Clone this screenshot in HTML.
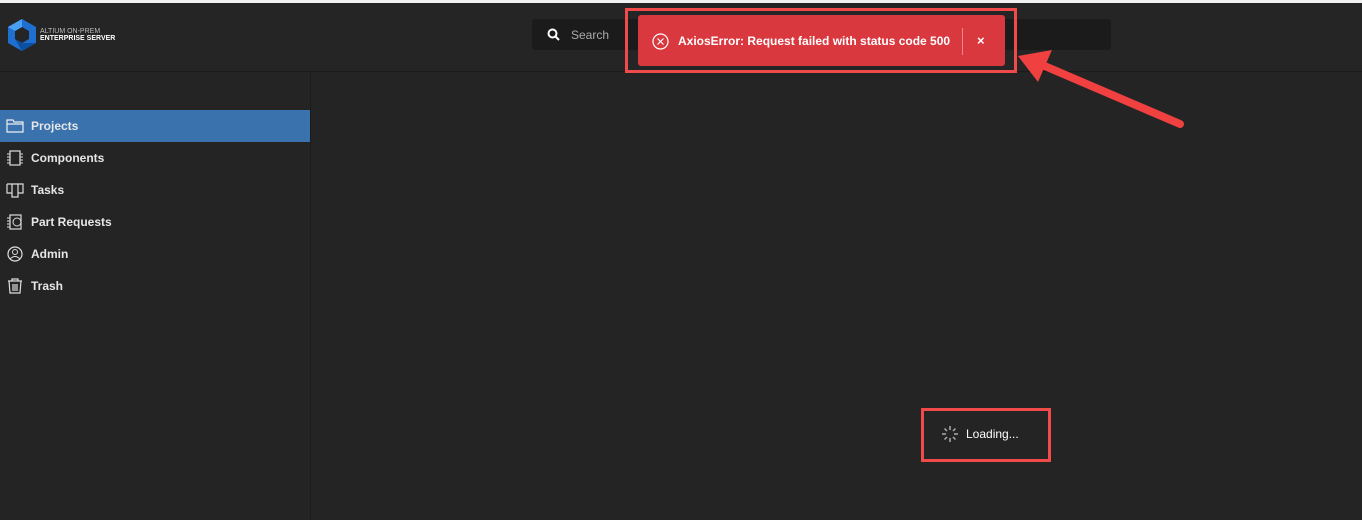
<!DOCTYPE html>
<html><head><style>
body{margin:0;width:1362px;height:520px;background:#242424;font-family:"Liberation Sans",sans-serif;position:relative;overflow:hidden}
.abs{position:absolute}
.nav{position:absolute;left:0;width:310px;height:32px;color:#e6e6e6;font-size:12px;font-weight:bold;line-height:32px}
.nav span{position:absolute;left:31px}
.nav svg{position:absolute;left:6px;top:8px}
</style></head><body>
<div class="abs" style="left:0;top:0;width:1362px;height:3px;background:#f2f2f2"></div>
<div class="abs" style="left:0;top:3px;width:1362px;height:68px;background:#252525;border-bottom:1px solid #1a1a1a"></div>
<div class="abs" style="left:310px;top:72px;width:1px;height:448px;background:#1c1c1c"></div>
<svg class="abs" style="left:7px;top:18px" width="30" height="34" viewBox="0 0 30 34"><path d="M15 1L29 9V25L15 33L1 25V9Z" fill="#1f6fd1"/><path d="M15 9L22 13V21L15 25L8 21V13Z" fill="#252525"/><path d="M1 9L15 1L15 9L8 13Z" fill="#49a0f0"/><path d="M8 21L15 25L29 25L15 33Z" fill="#0d4fa0"/></svg>
<div class="abs" style="left:40px;top:28px;font-size:7px;color:#bbb;line-height:7px">ALTIUM ON-PREM<br><b style="color:#fff">ENTERPRISE SERVER</b></div>
<div class="abs" style="left:532px;top:19px;width:579px;height:31px;background:#1b1b1b;border-radius:3px"></div>
<svg class="abs" style="left:547px;top:28px" width="13" height="13" viewBox="0 0 13 13"><circle cx="5.5" cy="5.5" r="4" fill="none" stroke="#fff" stroke-width="2"/><path d="M8.5 8.5L12 12" stroke="#fff" stroke-width="2"/></svg>
<div class="abs" style="left:571px;top:28px;font-size:12px;color:#aaa">Search</div>
<div class="abs" style="left:0;top:110px;width:310px;height:32px;background:#3a72ad"></div>
<div class="nav" style="top:110px"><svg width="18" height="16" viewBox="0 0 18 16"><path d="M1 2H7L8 4H17V14H1Z M1 6H17" fill="none" stroke="#eee" stroke-width="1.2"/></svg><span>Projects</span></div>
<div class="nav" style="top:142px"><svg width="18" height="16" viewBox="0 0 18 16"><rect x="4" y="1" width="10" height="14" fill="none" stroke="#ddd" stroke-width="1.2"/><path d="M1 4H4M1 7H4M1 10H4M1 13H4M14 4H17M14 7H17M14 10H17M14 13H17" stroke="#ddd"/></svg><span>Components</span></div>
<div class="nav" style="top:174px"><svg width="18" height="16" viewBox="0 0 18 16"><path d="M1 2H17V11H12V2M6 2V15H12V11M6 11H1V2" fill="none" stroke="#ddd" stroke-width="1.2"/></svg><span>Tasks</span></div>
<div class="nav" style="top:206px"><svg width="18" height="16" viewBox="0 0 18 16"><rect x="4" y="1" width="11" height="14" fill="none" stroke="#ddd" stroke-width="1.2"/><circle cx="11" cy="8" r="4" fill="none" stroke="#ddd"/><path d="M1 4H4M1 7H4M1 10H4M1 13H4" stroke="#ddd"/></svg><span>Part Requests</span></div>
<div class="nav" style="top:238px"><svg width="18" height="16" viewBox="0 0 18 16"><circle cx="9" cy="8" r="7" fill="none" stroke="#ddd" stroke-width="1.2"/><circle cx="9" cy="6" r="2.5" fill="none" stroke="#ddd"/><path d="M4 13Q9 8 14 13" fill="none" stroke="#ddd"/></svg><span>Admin</span></div>
<div class="nav" style="top:270px"><svg width="18" height="16" viewBox="0 0 18 16"><path d="M2 3H16M6 3V1H12V3M3 3L4 15H14L15 3M7 6V13M9 6V13M11 6V13" fill="none" stroke="#ddd" stroke-width="1.2"/></svg><span>Trash</span></div>
<div class="abs" style="left:625px;top:8px;width:386px;height:59px;border:3px solid #f04a4a"></div>
<div class="abs" style="left:638px;top:15px;width:367px;height:51px;background:#d9383f;border-radius:3px"></div>
<svg class="abs" style="left:652px;top:33px" width="17" height="17" viewBox="0 0 17 17"><circle cx="8.5" cy="8.5" r="7.5" fill="none" stroke="#fff" stroke-width="1.2"/><path d="M5.5 5.5L11.5 11.5M11.5 5.5L5.5 11.5" stroke="#fff" stroke-width="1.2"/></svg>
<div class="abs" style="left:678px;top:34px;font-size:12px;font-weight:bold;color:#fff">AxiosError: Request failed with status code 500</div>
<div class="abs" style="left:962px;top:28px;width:1px;height:27px;background:#e88"></div>
<div class="abs" style="left:977px;top:33px;font-size:13px;font-weight:bold;color:#fff">×</div>
<svg class="abs" style="left:1010px;top:48px" width="190" height="90" viewBox="0 0 190 90"><path d="M170 76L30 16" stroke="#f04040" stroke-width="8" stroke-linecap="round"/><path d="M8 8L42 2L28 34Z" fill="#f04040"/></svg>
<div class="abs" style="left:921px;top:408px;width:124px;height:48px;border:3px solid #f04a4a"></div>
<svg class="abs" style="left:941px;top:425px" width="18" height="18" viewBox="0 0 18 18"><g stroke="#aaa" stroke-width="1.5"><path d="M9 1V5M9 13V17M1 9H5M13 9H17M3.5 3.5L6 6M12 12L14.5 14.5M3.5 14.5L6 12M12 6L14.5 3.5"/></g></svg>
<div class="abs" style="left:966px;top:427px;font-size:12px;color:#fff">Loading...</div>
</body></html>
